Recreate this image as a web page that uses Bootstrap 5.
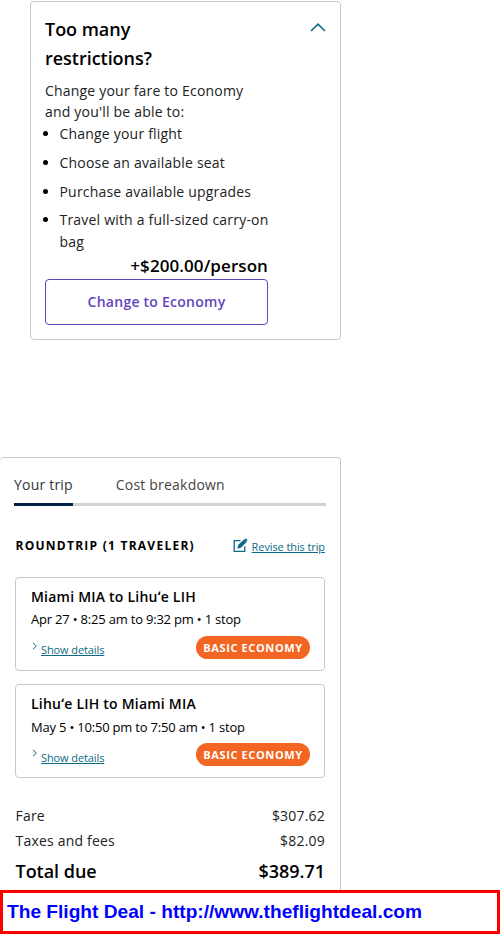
<!DOCTYPE html>
<html lang="en">
<head>
<meta charset="utf-8">
<meta name="viewport" content="width=device-width, initial-scale=1">
<title>Trip summary</title>
<link href="https://cdn.jsdelivr.net/npm/bootstrap@5.3.0/dist/css/bootstrap.min.css" rel="stylesheet">
<style>
body{font-family:"Open Sans","Noto Sans",sans-serif;font-size:14px;line-height:21px;color:#222;letter-spacing:.2px;background:#fff}
.page{width:500px;height:934px}
.fare-box{width:311px;height:339px;margin:1px 0 0 30px;padding:13px 14px 0;border:1px solid #c8c8c8;border-radius:4px}
.fare-copy{width:223px}
.fare-title{font-size:18px;line-height:29px;font-weight:600;color:#000;letter-spacing:-.03px;width:150px}
.fare-intro{margin-top:7px}
.perks{padding-left:14.5px;line-height:22px;margin:1px -6px 0 0}
.perks li{margin-bottom:6.8px}
.perks li::marker{color:#000}
.price{font-size:17px;line-height:24px;padding-bottom:2px;margin-top:1px;height:25px;font-weight:600;color:#000;letter-spacing:.08px}
.btn-fare{height:46px;border:1px solid #6244bb;color:#6244bb;border-radius:4px;font-size:14px;line-height:42px;font-weight:600;letter-spacing:.25px}
.trip-box{width:341px;height:433px;margin-top:117px;padding:0 15px 0 14px;border:1px solid #c8c8c8;border-bottom:0;border-left:0;border-radius:4px 4px 0 0}
.tabs{height:48px;padding-top:16px;border-bottom:3px solid #d3d4cf;margin-right:-1px}
.tab{height:32px;color:#444;border-bottom:3px solid transparent;margin-right:43px}
.tab.current{border-color:#01234a;color:#333}
.trip-body{padding-left:1px}
.trip-head{height:21px;margin-top:29px}
.trip-label{font-size:12px;font-weight:700;color:#000;letter-spacing:1.25px;padding-left:.5px}
.act{font-size:11px;line-height:16px;color:#0b6a86;letter-spacing:-.1px}
.revise{margin-top:2px}
.flight{height:94px;border:1px solid #c8c8c8;border-radius:4px;padding:8px 14px 0 15px}
.flight-a{margin-top:21px}
.flight-b{margin-top:13px}
.route{font-size:14px;line-height:22px;font-weight:600;color:#000;letter-spacing:.22px}
.when{font-size:13px;line-height:22px;color:#000;letter-spacing:-.2px}
.flight-b .when{padding-top:1px}
.bottom{margin-top:6px}
.flight-b .bottom{margin-top:5px}
.bottom .act{margin:6px 0 0 3px}
.flight-b .act{margin-top:7px}
.chev{margin-top:6px}
.pill{width:114px;height:23px;line-height:23px;border-radius:12px;background:#f26522;color:#fff;font-size:11px;font-weight:700;letter-spacing:.62px}
.sums{margin-top:27px;padding-left:.5px}
.total{font-size:18px;line-height:26px;margin-top:7px;font-weight:600;color:#000;letter-spacing:-.03px}
.site{height:44px;border:3px solid #f00;padding-left:4px;font:bold 19.15px/38px "Liberation Sans",Arial,sans-serif;color:#00f;letter-spacing:0}
svg{display:block;fill:none;stroke:#0b6a86}
</style>
</head>
<body>
<main class="page d-flex flex-column overflow-hidden">
  <section class="fare-box d-flex justify-content-between flex-shrink-0">
    <div class="fare-copy">
      <h2 class="fare-title mb-0">Too many restrictions?</h2>
      <p class="fare-intro mb-0">Change your fare to Economy and you'll be able to:</p>
      <ul class="perks">
        <li>Change your flight</li>
        <li>Choose an available seat</li>
        <li>Purchase available upgrades</li>
        <li class="mb-0">Travel with a full-sized carry-on bag</li>
      </ul>
      <div class="price text-end">+$200.00/person</div>
      <button type="button" class="btn btn-fare w-100 py-0">Change to Economy</button>
    </div>
    <svg class="mt-2" width="16" height="10" viewBox="0 0 16 10" stroke-width="1.6"><path d="M1 8 8 1.2l7 6.8"/></svg>
  </section>
  <section class="trip-box flex-shrink-0">
    <div class="tabs d-flex">
      <div class="tab current">Your trip</div>
      <div class="tab">Cost breakdown</div>
    </div>
    <div class="trip-body">
      <div class="trip-head d-flex justify-content-between align-items-center">
        <div class="trip-label">ROUNDTRIP (1 TRAVELER)</div>
        <div class="d-flex align-items-center">
          <svg class="me-1" width="15" height="15" viewBox="0 0 15 15" stroke-width="1.3"><path d="M7.5 2.7H1.2v10.6h10.6V8.5"/><path d="m5.2 9.8.6-2.4 5.3-5.2 1.7 1.7-5.3 5.2z" fill="#0b6a86"/><path d="m12.2 1 1.8 1.8" stroke-width="1.9"/></svg>
          <a href="#" class="act revise">Revise this trip</a>
        </div>
      </div>
      <div class="d-flex flex-column">
        <article class="flight flight-a">
          <div class="route">Miami MIA to Lihuʻe LIH</div>
          <div class="when">Apr 27 • 8:25 am to 9:32 pm • 1 stop</div>
          <div class="bottom d-flex justify-content-between">
            <div class="d-flex"><svg class="chev" width="7" height="8" viewBox="0 0 7 8"><path d="m2 .8 3.3 3.2L2 7.2"/></svg><a href="#" class="act">Show details</a></div>
            <div class="pill text-center">BASIC ECONOMY</div>
          </div>
        </article>
        <article class="flight flight-b">
          <div class="route">Lihuʻe LIH to Miami MIA</div>
          <div class="when">May 5 • 10:50 pm to 7:50 am • 1 stop</div>
          <div class="bottom d-flex justify-content-between">
            <div class="d-flex"><svg class="chev" width="7" height="8" viewBox="0 0 7 8"><path d="m2 .8 3.3 3.2L2 7.2"/></svg><a href="#" class="act">Show details</a></div>
            <div class="pill text-center">BASIC ECONOMY</div>
          </div>
        </article>
      </div>
      <div class="sums">
        <div class="d-flex justify-content-between"><span>Fare</span><span>$307.62</span></div>
        <div class="d-flex justify-content-between mt-1"><span>Taxes and fees</span><span>$82.09</span></div>
        <div class="total d-flex justify-content-between"><span>Total due</span><span>$389.71</span></div>
      </div>
    </div>
  </section>
  <footer class="site flex-shrink-0">The Flight Deal - http://www.theflightdeal.com</footer>
</main>
<script src="https://cdn.jsdelivr.net/npm/bootstrap@5.3.0/dist/js/bootstrap.bundle.min.js"></script>
</body>
</html>
